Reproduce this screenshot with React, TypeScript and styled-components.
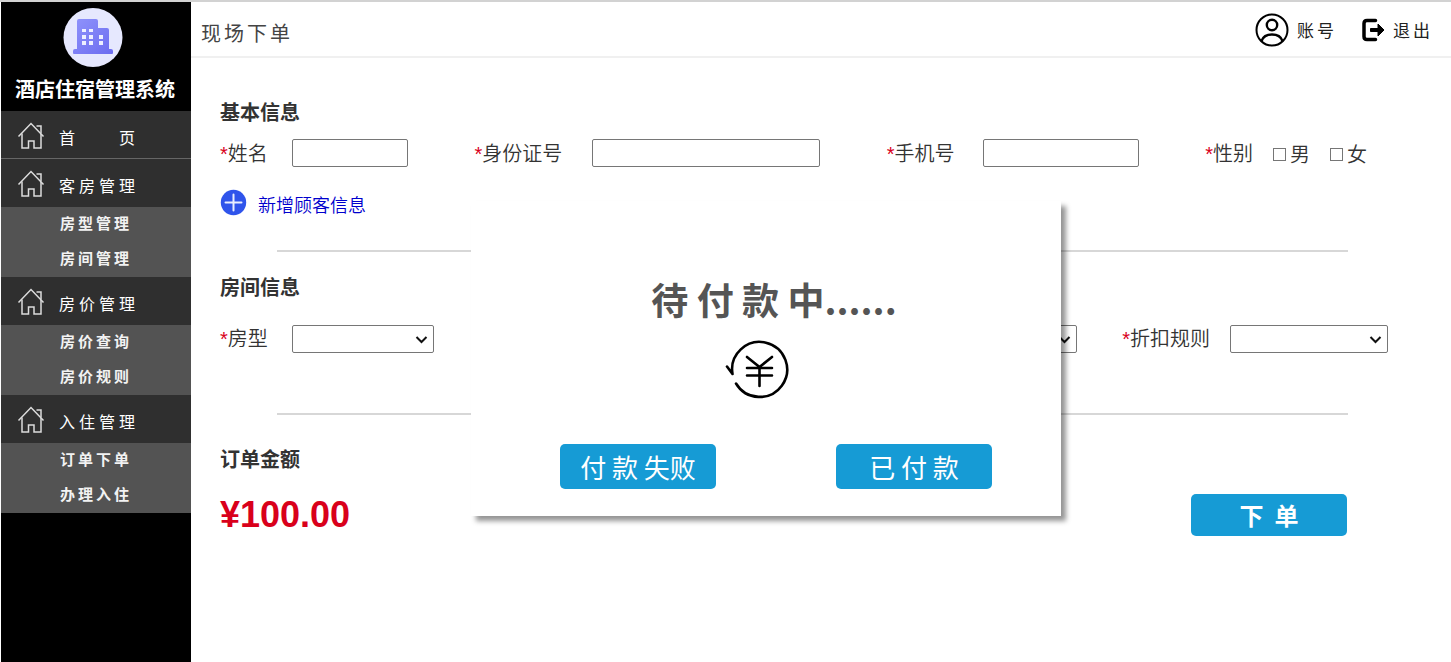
import React from "react";
import styled, { createGlobalStyle } from "styled-components";

const sans = `"Liberation Sans", "Noto Sans CJK SC", sans-serif`;
const cjk = `"Noto Sans CJK SC", sans-serif`;

const GlobalStyle = createGlobalStyle`
  *, *::before, *::after { box-sizing: border-box; }
  body { margin: 0; background: #fff; color: #333; font-family: ${cjk}; }
  a { text-decoration: none; }
`;

const Page = styled.div`
  display: flex;
  min-height: 100vh;
  padding-left: 1px;
  border-top: 2px solid #d2d2d2;
`;

const Sidebar = styled.aside`
  flex: none;
  width: 190px;
  background: #000;
`;

const Brand = styled.div`
  height: 109px;
  padding: 6px 0 0 14px;
  color: #fff;
  white-space: nowrap;
  & > svg { display: block; margin-left: 48px; }
`;

const BrandName = styled.h1`
  margin: 6px 0 0;
  font-size: 20px;
  line-height: 30px;
  font-weight: 700;
`;

const NavLink = styled.a<{ $divided?: boolean }>`
  display: flex;
  align-items: center;
  gap: 14px;
  height: 48px;
  padding: 2px 0 0 16px;
  background: #2f2f2f;
  border-bottom: ${(p) => (p.$divided ? "1px solid #666" : "none")};
  color: #fff;
  font-size: 16px;
  line-height: 24px;
  letter-spacing: 4px;
  & > span { padding-top: 2px; }
`;

const SubMenu = styled.div`
  display: flex;
  flex-direction: column;
  background: #535353;
`;

const SubLink = styled.a`
  height: 35px;
  padding-left: 59px;
  color: #f2f2f2;
  font-size: 15px;
  line-height: 32px;
  font-weight: 700;
  letter-spacing: 3px;
`;

const Main = styled.main`
  position: relative;
  flex: 1;
  min-width: 0;
`;

const Header = styled.header`
  display: flex;
  align-items: center;
  justify-content: space-between;
  height: 56px;
  padding: 2px 18px 0 10px;
  border-bottom: 2px solid #f0f0f0;
`;

const PageTitle = styled.h2`
  margin: 0;
  padding-top: 6px;
  color: #444;
  font-size: 20px;
  line-height: 30px;
  font-weight: 400;
  letter-spacing: 3px;
`;

const Actions = styled.nav`
  display: flex;
  align-items: center;
  gap: 24px;
`;

const Action = styled.a`
  display: flex;
  align-items: center;
  gap: 8px;
  color: #222;
  font-size: 17px;
  line-height: 24px;
  letter-spacing: 3px;
`;

const Content = styled.form`
  padding: 39px 84px 0 29px;
`;

const SectionTitle = styled.h3`
  margin: 0;
  font-size: 20px;
  line-height: 30px;
  font-weight: 700;
`;

const GuestRow = styled.div`
  display: flex;
  justify-content: space-between;
  align-items: center;
  margin-top: 11px;
`;

const RoomRow = styled.div`
  display: flex;
  align-items: center;
  gap: 45px;
  margin: 22px -21px 0 0;
`;

const Field = styled.div<{ $gap?: number; $push?: boolean }>`
  display: flex;
  align-items: center;
  gap: ${(p) => p.$gap ?? 24}px;
  margin-left: ${(p) => (p.$push ? "auto" : "0")};
  font-size: 20px;
  line-height: 28px;
  font-weight: 350;
  white-space: nowrap;
`;

const Star = styled.span`
  color: #d9001b;
  font-family: ${sans};
`;

const TextInput = styled.input<{ $width: number }>`
  width: ${(p) => p.$width}px;
  height: 28px;
  padding: 1px 6px;
  border: 1px solid #767676;
  border-radius: 2px;
  background: #fff;
  font: 16px ${cjk};
`;

const SelectBox = styled.span<{ $width: number }>`
  position: relative;
  display: block;
  width: ${(p) => p.$width}px;
  height: 28px;
  & > svg {
    position: absolute;
    top: 10px;
    right: 6px;
    pointer-events: none;
  }
`;

const NativeSelect = styled.select`
  display: block;
  width: 100%;
  height: 28px;
  padding: 0 22px 0 6px;
  appearance: none;
  border: 1px solid #767676;
  border-radius: 2px;
  background: #fff;
  font: 16px ${cjk};
`;

const Choice = styled.label`
  display: flex;
  align-items: center;
  gap: 4px;
  padding-top: 2px;
`;

const Check = styled.input`
  width: 13px;
  height: 13px;
  margin: 0;
  appearance: none;
  border: 1px solid #767676;
  background: #fff;
`;

const AddGuest = styled.a`
  display: flex;
  align-items: center;
  gap: 11px;
  width: max-content;
  margin-top: 18px;
  color: #0000cd;
  font-size: 18px;
  line-height: 28px;
  font-weight: 350;
  & > span { padding-top: 4px; }
`;

const Divider = styled.hr<{ $top: number; $bottom: number }>`
  height: 2px;
  margin: ${(p) => p.$top}px 19px ${(p) => p.$bottom}px 57px;
  border: 0;
  background: #d7d7d7;
`;

const Total = styled.div`
  display: flex;
  align-items: center;
  justify-content: space-between;
  margin: 20px 20px 0 0;
`;

const Price = styled.strong`
  color: #d9001b;
  font-family: ${sans};
  font-size: 36px;
  line-height: 40px;
`;

const Button = styled.button<{ $submit?: boolean }>`
  width: 156px;
  height: ${(p) => (p.$submit ? 42 : 45)}px;
  padding: 0;
  border: 0;
  border-radius: 5px;
  background: #169bd5;
  color: #fff;
  font-family: ${cjk};
  font-size: ${(p) => (p.$submit ? 24 : 26)}px;
  font-weight: ${(p) => (p.$submit ? 700 : 400)};
  line-height: 36px;
  white-space: pre;
`;

const Dialog = styled.section`
  position: absolute;
  top: 199px;
  left: 280px;
  display: flex;
  flex-direction: column;
  align-items: center;
  width: 590px;
  height: 315px;
  padding-top: 71px;
  background: #fff;
  box-shadow: 5px 5px 5px rgba(0, 0, 0, 0.42);
`;

const DialogTitle = styled.h2`
  margin: 0;
  padding-left: 16px;
  color: #555;
  font-size: 37px;
  line-height: 54px;
  font-weight: 700;
`;

const DialogIcon = styled.div`
  display: flex;
  padding: 14px 18px 0 0;
`;

const DialogActions = styled.div`
  display: flex;
  gap: 120px;
  margin-top: 44px;
  padding-left: 20px;
`;

const HouseIcon = () => (
  <svg width="28" height="28" viewBox="0 0 28 28" fill="none" stroke="#dcdcdc" strokeWidth="1.5" aria-hidden="true">
    <path d="M1.500 14.500 14 1.500 26.500 14.500" />
    <path d="M5 11.500V26h6.500v-7h5.500v7H24V11.500M19.500 4H24v7" />
  </svg>
);

const LogoIcon = () => (
  <svg width="60" height="60" viewBox="0 0 60 60" aria-hidden="true">
    <defs>
      <linearGradient id="tower" x1="0" y1="0" x2="1" y2="1">
        <stop offset="0" stopColor="#8f93fb" />
        <stop offset="1" stopColor="#6c6cf0" />
      </linearGradient>
    </defs>
    <circle cx="30" cy="29.500" r="29.500" fill="#e6e8fe" />
    <path d="M16 11h17q2 0 2 2v7h9q2 0 2 2v19h2q2 0 2 2v2q0 1-1 1H11q-1 0-1-1v-2q0-2 2-2h2V13q0-2 2-2z" fill="url(#tower)" />
    <path
      d="M19 21h4v3h-4zM26 21h4v3h-4zM19 27h4v4h-4zM26 27h4v4h-4zM36 27h4v4h-4zM19 33h4v4h-4zM26 33h4v4h-4zM36 33h4v4h-4z"
      fill="#eef0ff"
    />
  </svg>
);

const AccountIcon = () => (
  <svg width="34" height="34" viewBox="0 0 34 34" fill="none" stroke="#000" strokeWidth="2" aria-hidden="true">
    <circle cx="17" cy="17" r="15.500" />
    <circle cx="17" cy="12" r="5.200" strokeWidth="2.400" />
    <path d="M6.500 28c1.500-4.500 6-6.500 10.500-6.500S26 23.500 27.500 28" strokeWidth="2.400" />
  </svg>
);

const ExitIcon = () => (
  <svg width="24" height="24" viewBox="0 0 24 24" aria-hidden="true">
    <path d="M14.500 2.500H6Q3 2.500 3 5.500v13q0 3 3 3h8.500" fill="none" stroke="#000" strokeWidth="3.500" strokeLinecap="round" />
    <path d="M9.500 10.500H17V6l6 6-6 6v-4.500H9.500z" fill="#000" stroke="#000" strokeLinejoin="round" />
  </svg>
);

const PlusIcon = () => (
  <svg width="27" height="27" viewBox="0 0 27 27" aria-hidden="true">
    <circle cx="13.500" cy="13.500" r="12.700" fill="#2f54eb" />
    <path d="M5.500 13.500h16M13.500 5.500v16" stroke="#e8edff" strokeWidth="2" strokeLinecap="round" />
  </svg>
);

const RefundIcon = () => (
  <svg width="64" height="60" viewBox="0 0 64 60" fill="none" stroke="#000" strokeWidth="2.600" strokeLinecap="round" strokeLinejoin="round" aria-hidden="true">
    <path d="M11 43.500A27.500 27.500 0 1 0 7.500 34L2 26.500" />
    <path d="M22 17l12.500 10L47 17M22 28h25M22 35.500h25M34.500 27v19" />
  </svg>
);

const ChevronIcon = () => (
  <svg width="13" height="9" viewBox="0 0 13 9" fill="none" stroke="#111" strokeWidth="2" aria-hidden="true">
    <path d="M1.500 2l5 5 5-5" />
  </svg>
);

type SelectProps = { width: number } & React.SelectHTMLAttributes<HTMLSelectElement>;

const Select = ({ width, ...rest }: SelectProps) => (
  <SelectBox $width={width}>
    <NativeSelect {...rest} />
    <ChevronIcon />
  </SelectBox>
);

const groups = [
  { title: "客房管理", items: ["房型管理", "房间管理"] },
  { title: "房价管理", items: ["房价查询", "房价规则"] },
  { title: "入住管理", items: ["订单下单", "办理入住"] },
];

export default function App() {
  return (
    <>
      <GlobalStyle />
      <Page>
        <Sidebar>
          <Brand>
            <LogoIcon />
            <BrandName>酒店住宿管理系统</BrandName>
          </Brand>
          <nav>
            <NavLink href="#home" $divided>
              <HouseIcon />
              <span>首{"\u3000\u3000"}页</span>
            </NavLink>
            {groups.map((g) => (
              <React.Fragment key={g.title}>
                <NavLink href="#group">
                  <HouseIcon />
                  <span>{g.title}</span>
                </NavLink>
                <SubMenu>
                  {g.items.map((item) => (
                    <SubLink href="#item" key={item}>{item}</SubLink>
                  ))}
                </SubMenu>
              </React.Fragment>
            ))}
          </nav>
        </Sidebar>
        <Main>
          <Header>
            <PageTitle>现场下单</PageTitle>
            <Actions>
              <Action href="#account"><AccountIcon />账号</Action>
              <Action href="#exit"><ExitIcon />退出</Action>
            </Actions>
          </Header>
          <Content onSubmit={(e) => e.preventDefault()}>
            <SectionTitle>基本信息</SectionTitle>
            <GuestRow>
              <Field>
                <label htmlFor="name"><Star>*</Star>姓名</label>
                <TextInput id="name" $width={116} />
              </Field>
              <Field $gap={30}>
                <label htmlFor="idcard"><Star>*</Star>身份证号</label>
                <TextInput id="idcard" $width={228} />
              </Field>
              <Field $gap={28}>
                <label htmlFor="phone"><Star>*</Star>手机号</label>
                <TextInput id="phone" $width={156} />
              </Field>
              <Field $gap={20} role="group" aria-label="性别">
                <span><Star>*</Star>性别</span>
                <Choice><Check type="checkbox" />男</Choice>
                <Choice><Check type="checkbox" />女</Choice>
              </Field>
            </GuestRow>
            <AddGuest href="#add"><PlusIcon /><span>新增顾客信息</span></AddGuest>
            <Divider $top={32} $bottom={20} />
            <SectionTitle>房间信息</SectionTitle>
            <RoomRow>
              <Field>
                <label htmlFor="type"><Star>*</Star>房型</label>
                <Select id="type" width={142} />
              </Field>
              <Field $push>
                <Select aria-label="房间" width={158} />
              </Field>
              <Field $gap={20}>
                <label htmlFor="rule"><Star>*</Star>折扣规则</label>
                <Select id="rule" width={158} />
              </Field>
            </RoomRow>
            <Divider $top={60} $bottom={29} />
            <SectionTitle>订单金额</SectionTitle>
            <Total>
              <Price>¥100.00</Price>
              <Button type="submit" $submit>{"下\u00a0\u00a0单"}</Button>
            </Total>
          </Content>
          <Dialog role="dialog" aria-labelledby="pay-title">
            <DialogTitle id="pay-title">待 付 款 中......</DialogTitle>
            <DialogIcon><RefundIcon /></DialogIcon>
            <DialogActions>
              <Button type="button">付 款 失败</Button>
              <Button type="button">已 付 款</Button>
            </DialogActions>
          </Dialog>
        </Main>
      </Page>
    </>
  );
}
